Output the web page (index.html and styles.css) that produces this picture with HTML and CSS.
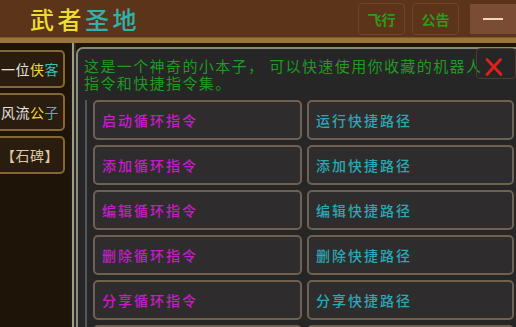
FILE: index.html
```html
<!DOCTYPE html>
<html lang="zh">
<head>
<meta charset="utf-8">
<link rel="stylesheet" href="styles.css">
</head>
<body>
<header class="topbar">
  <h1 class="title"><span class="t-yellow">武者</span><span class="t-cyan">圣地</span></h1>
  <div class="top-actions">
    <button class="top-btn">飞行</button>
    <button class="top-btn">公告</button>
    <button class="min-btn"><span class="min-line"></span></button>
  </div>
</header>
<div class="main">
  <aside class="sidebar">
    <button class="side-btn"><span class="c-white">一位</span><span class="c-yellow">侠</span><span class="c-cyan">客</span></button>
    <button class="side-btn"><span class="c-white">风流</span><span class="c-yellow">公</span><span class="c-cyan">子</span></button>
    <button class="side-btn c-beige">【石碑】</button>
  </aside>
  <div class="divider"></div>
  <section class="dialog">
    <p class="intro">这是一个神奇的小本子， 可以快速使用你收藏的机器人指令和快捷指令集。</p>
    <button class="close-btn" aria-label="关闭">
      <svg width="20" height="20" viewBox="0 0 20 20"><path d="M3 2.5 L17 17.5 M16.5 2.5 L3 17.5" stroke="#e0201c" stroke-width="2.8" stroke-linecap="round"/></svg>
    </button>
    <div class="list">
      <div class="scroll-line"></div>
      <div class="grid">
        <button class="cmd magenta">启动循环指令</button>
        <button class="cmd cyan">运行快捷路径</button>
        <button class="cmd magenta">添加循环指令</button>
        <button class="cmd cyan">添加快捷路径</button>
        <button class="cmd magenta">编辑循环指令</button>
        <button class="cmd cyan">编辑快捷路径</button>
        <button class="cmd magenta">删除循环指令</button>
        <button class="cmd cyan">删除快捷路径</button>
        <button class="cmd magenta">分享循环指令</button>
        <button class="cmd cyan">分享快捷路径</button>
        <button class="cmd" aria-hidden="true"></button>
        <button class="cmd" aria-hidden="true"></button>
      </div>
    </div>
  </section>
</div>
</body>
</html>
```

FILE: styles.css
```css
* { box-sizing: border-box; }
html, body { margin: 0; padding: 0; }
body {
  width: 516px;
  height: 327px;
  overflow: hidden;
  background: #1e1508;
  font-family: "Noto Sans CJK SC", "Noto Sans", sans-serif;
}
button { font-family: inherit; cursor: pointer; padding: 0; }

.topbar {
  height: 43px;
  background: #5c3419;
  border-bottom: 5px solid #9c7638;
  box-shadow: inset 0 -1px 0 #7a5a2a;
  display: flex;
  align-items: center;
  justify-content: space-between;
}
.title {
  margin: 0 0 0 30px;
  font-size: 24px;
  font-weight: 500;
  letter-spacing: 3.5px;
  line-height: 38px;
}
.t-yellow { color: #ecde2c; }
.t-cyan { color: #2fb2ae; }

.top-actions {
  display: flex;
  align-items: center;
  height: 38px;
}
.top-btn {
  width: 47px;
  height: 32px;
  margin-right: 7px;
  background: #5c3419;
  border: 1px solid #71442a;
  border-radius: 4px;
  color: #2e9a1a;
  font-size: 14px;
  font-weight: 700;
}
.top-btn + .top-btn { margin-right: 11px; }
.min-btn {
  width: 46px;
  height: 30px;
  background: #7b4c34;
  border: none;
  display: flex;
  align-items: center;
  justify-content: center;
}
.min-line {
  width: 20px;
  height: 2px;
  background: #f2d6bb;
}

.main {
  display: flex;
  height: 284px;
}
.sidebar {
  width: 70px;
  flex-shrink: 0;
  padding-top: 7px;
  display: flex;
  flex-direction: column;
  gap: 5px;
  background: #1e1508;
}
.side-btn {
  width: 70px;
  height: 38px;
  margin-left: -5px;
  background: #2a1c0e;
  border: 2px solid #856636;
  border-radius: 5px;
  font-size: 14px;
  letter-spacing: 0.5px;
  color: #e0e0e0;
}
.c-white { color: #e4e4e0; }
.c-yellow { color: #ecdc36; }
.c-cyan { color: #3cbcbc; }
.c-beige { color: #dccaa6; }

.divider {
  width: 6px;
  flex-shrink: 0;
  border-left: 2px solid #1a1a18;
  background: linear-gradient(to right, #a39a80 0 2px, #2a2a28 2px);
}

.dialog {
  position: relative;
  flex: 1;
  margin-top: 4px;
  margin-right: -12px;
  background: #262626;
  border: 2px solid #8c8a80;
  border-right: none;
  border-bottom: none;
  border-top-left-radius: 7px;
  padding: 8px 0 0 6px;
}
.intro {
  margin: 0;
  width: 412px;
  color: #1f9a22;
  font-size: 15px;
  letter-spacing: 1.4px;
  line-height: 17px;
}
.close-btn {
  position: absolute;
  top: -1px;
  right: 12px;
  width: 40px;
  height: 31px;
  background: transparent;
  border: 1px solid #4a3c30;
  border-radius: 4px;
  display: flex;
  align-items: flex-end;
  justify-content: center;
  padding: 0 4px 1px 0;
}

.list {
  display: flex;
  margin-top: 9px;
  margin-left: 1px;
}
.scroll-line {
  width: 2px;
  height: 240px;
  background: #565656;
  margin-right: 6px;
}
.grid {
  display: grid;
  grid-template-columns: 209px 207px;
  grid-auto-rows: 40px;
  column-gap: 5px;
  row-gap: 5px;
}
.cmd {
  background: #2e2c2c;
  border: 2px solid #6f6052;
  border-radius: 5px;
  text-align: left;
  padding-left: 7px;
  font-size: 14px;
  letter-spacing: 2px;
  font-weight: 500;
}
.magenta { color: #c41ec8; }
.cyan { color: #2aa8b6; }
```
